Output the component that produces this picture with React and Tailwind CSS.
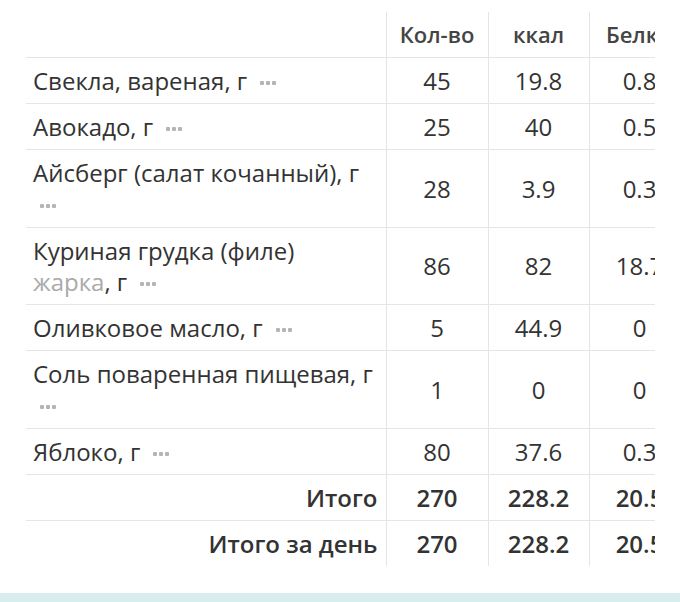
import React from "react";

const rows = [
  { name: "Свекла, вареная, г", qty: "45", kcal: "19.8", prot: "0.8", fat: "0", carb: "4.3" },
  { name: "Авокадо, г", qty: "25", kcal: "40", prot: "0.5", fat: "3.7", carb: "0.5" },
  { name: "Айсберг (салат кочанный), г", tall: true, qty: "28", kcal: "3.9", prot: "0.3", fat: "0", carb: "0.6" },
  { name: "Куриная грудка (филе)", sub: "жарка", qty: "86", kcal: "82", prot: "18.7", fat: "0.8", carb: "0" },
  { name: "Оливковое масло, г", qty: "5", kcal: "44.9", prot: "0", fat: "5", carb: "0" },
  { name: "Соль поваренная пищевая, г", tall: true, qty: "1", kcal: "0", prot: "0", fat: "0", carb: "0" },
  { name: "Яблоко, г", qty: "80", kcal: "37.6", prot: "0.3", fat: "0.3", carb: "7.8" },
];

function Dots() {
  return (
    <span className="inline-flex gap-[2px] ml-[7px] align-[5px]">
      <span className="w-[4px] h-[4px] rounded-[1px] bg-[#b5b5b5]" />
      <span className="w-[4px] h-[4px] rounded-[1px] bg-[#b5b5b5]" />
      <span className="w-[4px] h-[4px] rounded-[1px] bg-[#b5b5b5]" />
    </span>
  );
}

const num = "text-center align-middle border-l border-[#e4e6e6] px-[6px]";
const head = num + " font-semibold text-[#444] text-[22px]";

export default function App() {
  return (
    <div
      className="w-[680px] h-[602px] bg-white flex flex-col text-[#333] text-[24px] leading-[31px]"
      style={{ fontFamily: '"Open Sans", "Liberation Sans", sans-serif' }}
    >
      <div className="ml-[26px] mt-[12px] w-[629px] overflow-hidden">
        <table className="border-collapse table-fixed w-[865px]">
          <colgroup>
            <col className="w-[360px]" />
            <col className="w-[102px]" />
            <col className="w-[101px]" />
            <col className="w-[101px]" />
            <col className="w-[101px]" />
            <col className="w-[100px]" />
          </colgroup>
          <thead>
            <tr className="h-[45px]">
              <th />
              <th className={head}>Кол-во</th>
              <th className={head}>ккал</th>
              <th className={head}>Белки</th>
              <th className={head}>Жиры</th>
              <th className={head}>Углев.</th>
            </tr>
          </thead>
          <tbody>
            {rows.map((r) => (
              <tr key={r.name} className={"border-t border-[#e4e6e6]" + (r.tall ? " h-[78px]" : "")}>
                <td className="pl-[7px] pr-[8px] py-[7px] text-left align-middle">
                  {r.sub ? (
                    <>
                      <span className="block">{r.name}</span>
                      <span className="text-[#aaa]">{r.sub}</span>, г <Dots />
                    </>
                  ) : (
                    <>
                      {r.name} <Dots />
                    </>
                  )}
                </td>
                <td className={num}>{r.qty}</td>
                <td className={num}>{r.kcal}</td>
                <td className={num}>{r.prot}</td>
                <td className={num}>{r.fat}</td>
                <td className={num}>{r.carb}</td>
              </tr>
            ))}
            <tr className="border-t border-[#e4e6e6] font-semibold">
              <td className="pl-[7px] pr-[8px] py-[7px] text-right">Итого</td>
              <td className={num}>270</td>
              <td className={num}>228.2</td>
              <td className={num}>20.5</td>
              <td className={num}>12.1</td>
              <td className={num}>13.2</td>
            </tr>
            <tr className="border-t border-[#e4e6e6] font-semibold">
              <td className="pl-[7px] pr-[8px] py-[7px] text-right">Итого за день</td>
              <td className={num}>270</td>
              <td className={num}>228.2</td>
              <td className={num}>20.5</td>
              <td className={num}>12.1</td>
              <td className={num}>13.2</td>
            </tr>
          </tbody>
        </table>
      </div>
      <div className="flex-1" />
      <div className="h-[9px] bg-[#d9ecef]" />
    </div>
  );
}
